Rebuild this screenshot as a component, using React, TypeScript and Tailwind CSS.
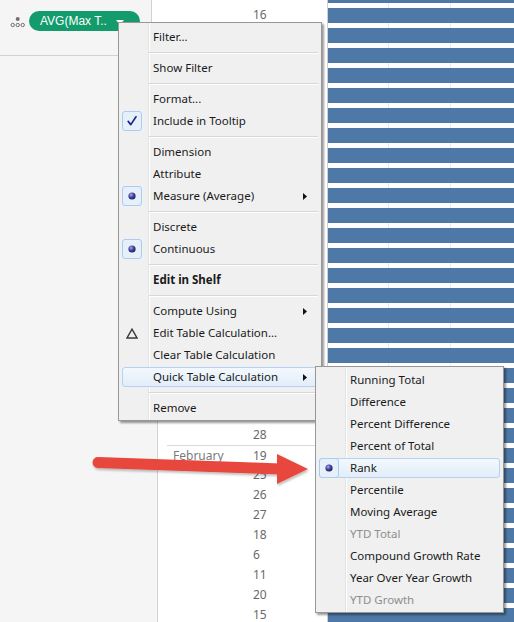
import React from "react";

const numbers: (number | null)[] = [
  16, null, null, null, null, null, null, null, null, null, null, null, null, null, null, null, null, null, null, null, null,
  28, 19, 25, 26, 27, 18, 6, 11, 20, 15,
];

function Bullet() {
  return (
    <svg width="8" height="8" viewBox="0 0 8 8">
      <defs>
        <radialGradient id="sph" cx="38%" cy="35%" r="65%">
          <stop offset="0" stopColor="#b4b4ee" />
          <stop offset="0.45" stopColor="#4d4da8" />
          <stop offset="1" stopColor="#1c1c60" />
        </radialGradient>
      </defs>
      <circle cx="4" cy="4" r="3.6" fill="url(#sph)" />
    </svg>
  );
}

function Check() {
  return (
    <svg width="12" height="12" viewBox="0 0 12 12">
      <path d="M2.2 6.4 L4.8 9.6 L10 1.8" fill="none" stroke="#1b2a86" strokeWidth="1.7" strokeLinecap="round" strokeLinejoin="round" />
    </svg>
  );
}

function Delta() {
  return (
    <svg width="12" height="11" viewBox="0 0 12 11">
      <path d="M6 1.2 L11 10 L1 10 Z" fill="none" stroke="#3a3a3a" strokeWidth="1.4" strokeLinejoin="miter" />
    </svg>
  );
}

function SubArrow() {
  return (
    <svg width="4" height="7" viewBox="0 0 4 7">
      <path d="M0 0 L4 3.5 L0 7 Z" fill="#111" />
    </svg>
  );
}

type Item = {
  label?: string;
  sep?: boolean;
  icon?: "check" | "bullet" | "delta";
  arrow?: boolean;
  bold?: boolean;
  disabled?: boolean;
  highlight?: boolean;
};

function MenuRow({ it }: { it: Item }) {
  if (it.sep) {
    return (
      <div className="h-[9px] pt-[4px] pl-[30px] pr-[3px]">
        <div className="border-t border-b border-t-[#d7d7d7] border-b-white" />
      </div>
    );
  }
  return (
    <div className="h-[22px] px-[3px] py-[1px]">
      <div
        className={
          it.highlight
            ? "h-full flex items-center rounded-[3px] border border-[#b4d2f3] bg-[linear-gradient(to_bottom,#f3f8fd,#e2edf9)]"
            : "h-full flex items-center rounded-[3px] border border-transparent"
        }
      >
        <div className="-ml-[1px] w-[20px] h-[20px] shrink-0 flex items-center justify-center">
          {it.icon === "check" || it.icon === "bullet" ? (
            <div className="w-[20px] h-[20px] rounded-[3px] border border-[#a9cdf1] bg-[#e6f0fb] flex items-center justify-center">
              {it.icon === "check" ? <Check /> : <Bullet />}
            </div>
          ) : it.icon === "delta" ? (
            <Delta />
          ) : null}
        </div>
        <span
          className={
            "ml-[11px] whitespace-nowrap " +
            (it.bold ? "font-bold " : "") +
            (it.disabled ? "text-[#8e8e8e]" : "text-[#1a1a1a]")
          }
        >
          {it.label}
        </span>
        {it.arrow ? (
          <div className="ml-auto mr-[10px] flex items-center">
            <SubArrow />
          </div>
        ) : null}
      </div>
    </div>
  );
}

const mainItems: Item[] = [
  { label: "Filter..." },
  { sep: true },
  { label: "Show Filter" },
  { sep: true },
  { label: "Format..." },
  { label: "Include in Tooltip", icon: "check" },
  { sep: true },
  { label: "Dimension" },
  { label: "Attribute" },
  { label: "Measure (Average)", icon: "bullet", arrow: true },
  { sep: true },
  { label: "Discrete" },
  { label: "Continuous", icon: "bullet" },
  { sep: true },
  { label: "Edit in Shelf", bold: true },
  { sep: true },
  { label: "Compute Using", arrow: true },
  { label: "Edit Table Calculation...", icon: "delta" },
  { label: "Clear Table Calculation" },
  { label: "Quick Table Calculation", arrow: true, highlight: true },
  { sep: true },
  { label: "Remove" },
];

const subItems: Item[] = [
  { label: "Running Total" },
  { label: "Difference" },
  { label: "Percent Difference" },
  { label: "Percent of Total" },
  { label: "Rank", icon: "bullet", highlight: true },
  { label: "Percentile" },
  { label: "Moving Average" },
  { label: "YTD Total", disabled: true },
  { label: "Compound Growth Rate" },
  { label: "Year Over Year Growth" },
  { label: "YTD Growth", disabled: true },
];

const menuBg =
  "bg-[linear-gradient(to_right,#f0f0f0_29px,#e2e3e3_29px,#e2e3e3_30px,#ffffff_30px,#ffffff_31px,#f0f0f0_31px)]";

export default function App() {
  return (
    <div className="relative w-[514px] h-[622px] overflow-hidden bg-white flex font-['Noto_Sans',sans-serif]">
      {/* Left pane */}
      <div className="w-[158px] h-full flex flex-col shrink-0">
        <div className="h-[56px] flex">
          <div className="w-[152px] h-full bg-[#f5f5f5] border-r border-b border-[#d2d2d2] flex items-start pt-[11px] pl-[10px]">
            <svg width="15" height="12" viewBox="0 0 15 12" className="mt-[5px]">
              <circle cx="7.7" cy="3" r="2" fill="#707070" />
              <circle cx="2.7" cy="9" r="1.7" fill="none" stroke="#707070" strokeWidth="1" />
              <circle cx="7.7" cy="9" r="1.7" fill="none" stroke="#707070" strokeWidth="1" />
              <circle cx="12.7" cy="9" r="1.7" fill="none" stroke="#707070" strokeWidth="1" />
            </svg>
            <div className="ml-[4px] h-[20px] w-[111px] rounded-full bg-[#139b6b] flex items-center pl-[11px] font-['Liberation_Sans',sans-serif] text-[12px] text-white">
              <span>AVG(Max T..</span>
              <svg width="8" height="5" viewBox="0 0 8 5" className="ml-[9px] mt-[3px]">
                <path d="M0 0 L8 0 L4 5 Z" fill="#ffffff" />
              </svg>
            </div>
          </div>
          <div className="flex-1 h-full bg-white border-b border-[#d2d2d2]" />
        </div>
        <div className="flex-1 bg-[#f5f5f5] border-r border-[#d2d2d2]" />
      </div>

      {/* Table column */}
      <div className="w-[169px] h-full shrink-0 pt-[5px]">
        {numbers.map((n, i) => (
          <div
            key={i}
            className={
              "h-[20px] ml-[9px] flex items-center text-[12px] " +
              (i === 22 ? "border-t border-[#d9d9d9]" : "")
            }
          >
            <div className="w-[86px] pl-[6px] text-[#7a7a7a]">{i === 22 ? "February" : ""}</div>
            <div className="text-[#6a6a6a]">{n === null ? "" : n}</div>
          </div>
        ))}
      </div>

      {/* Bars */}
      <div className="flex-1 h-full border-l border-[#cfcfcf]">
        <svg width="186" height="622" viewBox="0 0 186 622">
          <rect x="60" y="0" width="1" height="622" fill="#ebebeb" />
          <rect x="122" y="0" width="1" height="622" fill="#ebebeb" />
          <rect x="0" y="0" width="186" height="3" fill="#4e79a7" />
          {numbers.map((_, k) => (
            <rect key={k} x="0" y={8 + 20 * k} width="186" height="15" fill="#4e79a7" />
          ))}
        </svg>
      </div>

      {/* Main context menu */}
      <div
        className={
          "absolute left-[118px] top-[22px] w-[204px] border border-[#979797] pt-[3px] pb-[1px] text-[11.5px] shadow-[2px_2px_2px_rgba(0,0,0,0.4)] " +
          menuBg
        }
      >
        {mainItems.map((it, i) => (
          <MenuRow key={i} it={it} />
        ))}
      </div>

      {/* Submenu */}
      <div
        className={
          "absolute left-[315px] top-[366px] w-[189px] border border-[#979797] pt-[2px] pb-[1px] text-[11.5px] shadow-[2px_2px_2px_rgba(0,0,0,0.4)] " +
          menuBg
        }
      >
        {subItems.map((it, i) => (
          <MenuRow key={i} it={it} />
        ))}
      </div>

      {/* Red annotation arrow */}
      <svg className="absolute left-0 top-0 pointer-events-none" width="514" height="622" viewBox="0 0 514 622">
        <defs>
          <filter id="ash" x="-10%" y="-50%" width="120%" height="200%">
            <feDropShadow dx="1" dy="2" stdDeviation="1.2" floodColor="#000" floodOpacity="0.25" />
          </filter>
        </defs>
        <g filter="url(#ash)">
          <line x1="98" y1="462.5" x2="280" y2="469" stroke="#e8473d" strokeWidth="11" strokeLinecap="round" />
          <path d="M277 454 L308 469 L277 484 Z" fill="#e8473d" />
        </g>
      </svg>
    </div>
  );
}
